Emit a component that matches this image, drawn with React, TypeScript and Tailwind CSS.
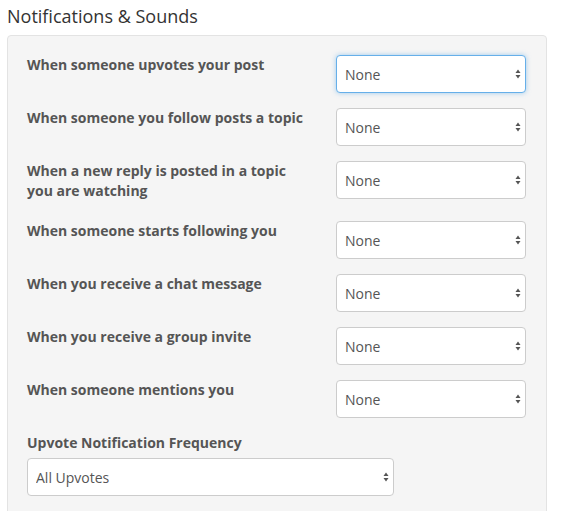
const rows = [
  { label: 'When someone upvotes your post', focused: true },
  { label: 'When someone you follow posts a topic' },
  { label: 'When a new reply is posted in a topic you are watching' },
  { label: 'When someone starts following you' },
  { label: 'When you receive a chat message' },
  { label: 'When you receive a group invite' },
  { label: 'When someone mentions you' },
];

function Arrows() {
  return (
    <svg width="8" height="12" viewBox="0 0 8 12" className="absolute right-[4px] top-1/2 -translate-y-1/2 pointer-events-none">
      <path d="M4 1.5 L6.5 5 L1.5 5 Z" fill="#555" />
      <path d="M4 10.5 L6.5 7 L1.5 7 Z" fill="#555" />
    </svg>
  );
}

function Select({ value, focused, className }: { value: string; focused?: boolean; className?: string }) {
  return (
    <div className={'relative ' + (className ?? '')}>
      <select
        defaultValue={value}
        className={
          'appearance-none w-full h-[38px] rounded-[4px] bg-white pl-[8px] pr-6 text-[14px] text-[#555] outline-none border ' +
          (focused
            ? 'border-[#66afe9] shadow-[0_0_5px_rgba(102,175,233,0.6)]'
            : 'border-[#ccc]')
        }
      >
        <option>{value}</option>
      </select>
      <Arrows />
    </div>
  );
}

export default function App() {
  return (
    <div className="bg-white min-h-[511px] w-[570px] overflow-hidden" style={{ fontFamily: '"Open Sans", sans-serif' }}>
      <h2 className="pl-[7px] pt-[4px] text-[18px] leading-[24px] text-[#333]">Notifications &amp; Sounds</h2>
      <div className="ml-[7px] mt-[7px] w-[540px] rounded-t-[4px] border border-[#e3e3e3] bg-[#f5f5f5] pl-[19px] pr-[20px] pt-[19px] pb-10">
        {rows.map((r) => (
          <div key={r.label} className="flex justify-between items-start mb-[15px]">
            <label className="w-[280px] text-[14px] leading-[20px] font-bold text-[#555] mb-[5px]">{r.label}</label>
            <Select value="None" focused={r.focused} className="w-[190px]" />
          </div>
        ))}
        <label className="block text-[14px] leading-[20px] font-bold text-[#555] mb-[5px]">Upvote Notification Frequency</label>
        <Select value="All Upvotes" className="w-[367px]" />
      </div>
    </div>
  );
}
